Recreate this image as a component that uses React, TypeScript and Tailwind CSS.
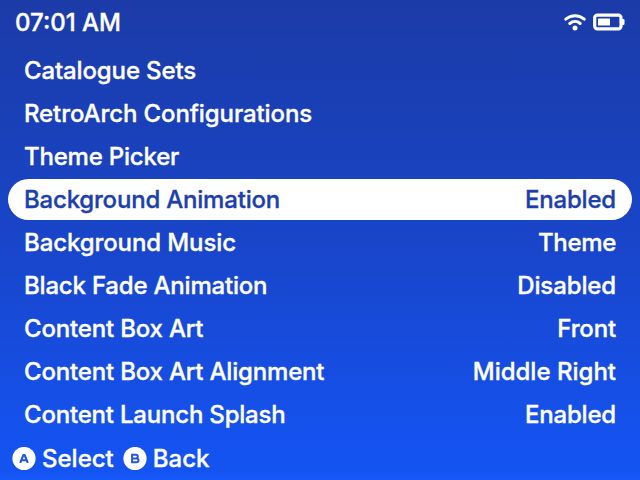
const rows: { label: string; value?: string; tracking: string; valueTracking?: string }[] = [
  { label: "Catalogue Sets", tracking: "tracking-[-0.14px]" },
  { label: "RetroArch Configurations", tracking: "tracking-[-0.1px]" },
  { label: "Theme Picker", tracking: "tracking-[-0.2px]" },
  { label: "Background Animation", value: "Enabled", tracking: "tracking-[-0.2px]", valueTracking: "tracking-[-0.18px]" },
  { label: "Background Music", value: "Theme", tracking: "tracking-[-0.1px]", valueTracking: "tracking-[-0.3px]" },
  { label: "Black Fade Animation", value: "Disabled", tracking: "tracking-[-0.2px]", valueTracking: "tracking-[-0.12px]" },
  { label: "Content Box Art", value: "Front", tracking: "tracking-[-0.18px]", valueTracking: "tracking-[-0.15px]" },
  { label: "Content Box Art Alignment", value: "Middle Right", tracking: "tracking-[-0.18px]" },
  { label: "Content Launch Splash", value: "Enabled", tracking: "tracking-[-0.2px]", valueTracking: "tracking-[-0.18px]" },
];

function ButtonA() {
  return (
    <svg width="24" height="24" viewBox="0 0 24 24">
      <circle cx="12" cy="11.5" r="11.6" fill="white" />
      <path d="M8.2 15.8 11.4 8h1.2l3.2 7.8M9.6 13.3h4.8" fill="none" stroke="#2456e0" strokeWidth="2.1" strokeLinejoin="round" />
    </svg>
  );
}

function ButtonB() {
  return (
    <svg width="24" height="24" viewBox="0 0 24 24">
      <circle cx="12" cy="11.5" r="11.6" fill="white" />
      <path d="M9.1 7.8h3.9a1.8 1.8 0 0 1 0 3.6H9.1h4.5a1.9 1.9 0 0 1 0 3.8H9.1z" fill="none" stroke="#2456e0" strokeWidth="2" />
    </svg>
  );
}

export default function App() {
  return (
    <main className="flex h-[480px] w-[640px] flex-col overflow-hidden bg-[linear-gradient(to_bottom,#1b3ba7_0%,#1945c9_50%,#1453f0_94%,#1453f0_98%,#1559fa_100%)] font-['Inter',sans-serif] text-[24px] leading-none font-medium whitespace-nowrap text-white [-webkit-text-stroke:0.35px_currentColor]">
      <header className="flex h-[45px] items-center justify-between pr-[15px] pl-[15px]">
        <span>07:01 AM</span>
        <div className="flex items-center gap-[6px]">
          <svg width="24" height="20" viewBox="0 0 24 20" fill="none" stroke="white" strokeWidth="3" strokeLinecap="round">
            <path d="M2.8 6.2a14 14 0 0 1 18.4 0M6.8 10.5a8 8 0 0 1 10.4 0" />
            <circle cx="12" cy="15" r="2.5" fill="white" stroke="none" />
          </svg>
          <svg width="32" height="20" viewBox="0 0 32 20">
            <rect x="1.7" y="2.2" width="26.3" height="13.6" rx="2.6" fill="none" stroke="white" strokeWidth="3.2" />
            <rect x="5" y="5.5" width="12" height="7" fill="white" />
            <rect x="28.5" y="6" width="3" height="6" rx="1.2" fill="white" />
          </svg>
        </div>
      </header>
      <ul className="mt-[5px] flex flex-col gap-[2px] px-2">
        {rows.map(({ label, value, tracking, valueTracking }, i) => (
          <li key={label} className={`flex h-[41px] items-center justify-between rounded-full px-4 ${i === 3 ? "bg-white text-[#1d3fae]" : ""}`}>
            <span className={tracking}>{label}</span>
            <span className={valueTracking}>{value}</span>
          </li>
        ))}
      </ul>
      <footer className="mt-[2px] flex h-[43px] items-center gap-[9px] pl-3">
        <div className="flex items-center gap-[6px]"><ButtonA /><span>Select</span></div>
        <div className="flex items-center gap-[6px]"><ButtonB /><span>Back</span></div>
      </footer>
    </main>
  );
}
